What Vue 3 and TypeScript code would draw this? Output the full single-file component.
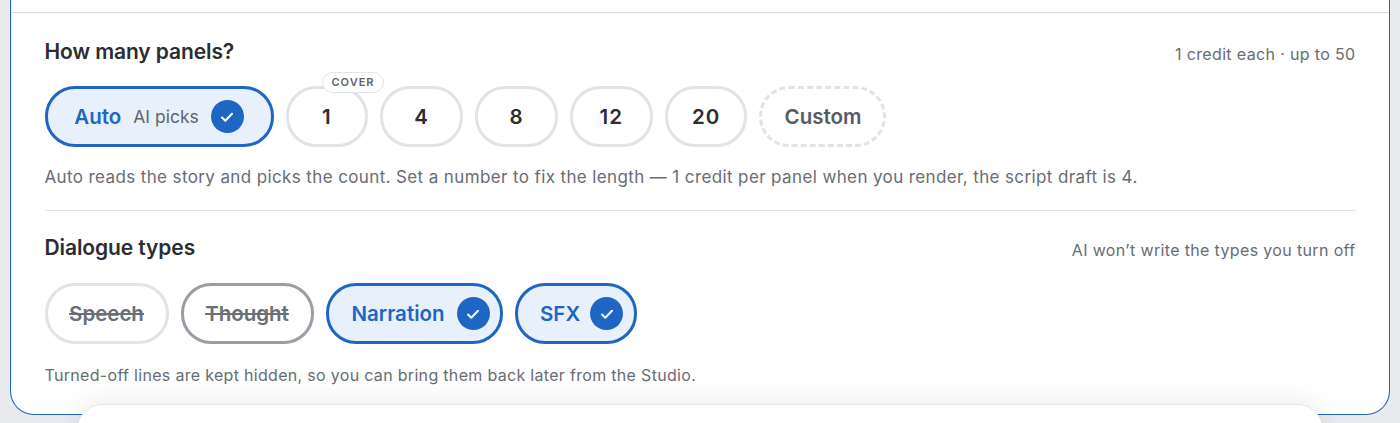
<script setup lang="ts">
interface Chip { label: string; sub?: string; on?: boolean; badge?: string; dashed?: boolean; off?: boolean; strong?: boolean; num?: boolean; left?: boolean; tight?: boolean; w: number }
const counts: Chip[] = [
  { label: 'Auto', sub: 'AI picks', on: true, w: 229 },
  { label: '1', badge: 'COVER', num: true, w: 82.8 },
  { label: '4', num: true, w: 82.8 },
  { label: '8', num: true, w: 82.8 },
  { label: '12', num: true, w: 82.8 },
  { label: '20', num: true, w: 82.8 },
  { label: 'Custom', dashed: true, w: 127 },
]
const types: Chip[] = [
  { label: 'Speech', off: true, w: 124 },
  { label: 'Thought', off: true, strong: true, w: 133 },
  { label: 'Narration', on: true, left: true, w: 177.5 },
  { label: 'SFX', on: true, left: true, tight: true, w: 122 },
]
function cls(c: Chip) {
  return { on: c.on, dashed: c.dashed, off: c.off, strong: c.strong, num: c.num, left: c.left, tight: c.tight }
}
</script>

<template>
  <div class="page">
    <div class="card">
      <div class="top"></div>
      <section class="sec first">
        <div class="head">
          <h2>How many panels?</h2>
          <span class="hint">1 credit each · up to 50</span>
        </div>
        <div class="chips">
          <button v-for="c in counts" :key="c.label" class="chip" :class="cls(c)" :style="{ width: c.w + 'px' }">
            <span v-if="c.badge" class="badge">{{ c.badge }}</span>
            <span class="label">{{ c.label }}</span>
            <span v-if="c.sub" class="sub">{{ c.sub }}</span>
            <span v-if="c.on" class="tick">
              <svg viewBox="0 0 16 16" width="16" height="16"><path d="M3 8.5l3.3 3.2L13 4.8" fill="none" stroke="#fff" stroke-width="2" stroke-linecap="round" stroke-linejoin="round"/></svg>
            </span>
          </button>
        </div>
        <p class="note big">Auto reads the story and picks the count. Set a number to fix the length — 1 credit per panel when you render, the script draft is 4.</p>
      </section>
      <section class="sec second">
        <div class="head">
          <h2>Dialogue types</h2>
          <span class="hint">AI won’t write the types you turn off</span>
        </div>
        <div class="chips">
          <button v-for="c in types" :key="c.label" class="chip" :class="cls(c)" :style="{ width: c.w + 'px' }">
            <span class="label">{{ c.label }}</span>
            <span v-if="c.on" class="tick">
              <svg viewBox="0 0 16 16" width="16" height="16"><path d="M3 8.5l3.3 3.2L13 4.8" fill="none" stroke="#fff" stroke-width="2" stroke-linecap="round" stroke-linejoin="round"/></svg>
            </span>
          </button>
        </div>
        <p class="note">Turned-off lines are kept hidden, so you can bring them back later from the Studio.</p>
      </section>
    </div>
    <div class="sheet"></div>
  </div>
</template>

<style>
html, body { margin: 0; background: #e9eaec; }
</style>

<style scoped>
.page {
  position: relative;
  width: 1400px;
  height: 423px;
  overflow: hidden;
  background: #e9eaec;
  font-family: Inter, "Liberation Sans", sans-serif;
}
.card {
  box-sizing: border-box;
  width: 1380px;
  height: 415px;
  margin-left: 10px;
  padding: 0 33.5px;
  background: #fff;
  border: 1.5px solid #1f66c4;
  border-top: 0;
  border-radius: 0 0 24px 24px;
}
.top {
  height: 12px;
  margin: 0 -33.5px;
  border-bottom: 1px solid #d9dde3;
}
.sec.first {
  padding-top: 26px;
  height: 198px;
  box-sizing: border-box;
  border-bottom: 1px solid #dfe1e5;
}
.sec.second { padding-top: 24px; }
.head {
  display: flex;
  justify-content: space-between;
  align-items: center;
  height: 27px;
}
h2 {
  margin: 0 0 2px;
  font-size: 21px;
  font-weight: 600;
  letter-spacing: -0.1px;
  color: #2b2d31;
}
.hint {
  margin-top: 2px;
  font-size: 16px;
  color: #686c73;
  letter-spacing: 0.35px;
}
.chips {
  display: flex;
  gap: 12px;
  margin-top: 20px;
}
.second .chips { margin-top: 21px; }
.chip {
  position: relative;
  box-sizing: border-box;
  height: 61px;
  padding: 0;
  display: flex;
  align-items: center;
  justify-content: center;
  gap: 12px;
  border: 3px solid #e1e3e6;
  border-radius: 30px;
  background: #fff;
  font-family: inherit;
  font-size: 20.5px;
  font-weight: 600;
  color: #2b2d31;
}
.chip.num { letter-spacing: 1px; }
.chip.dashed { border-style: dashed; color: #565b66; }
.chip.on {
  border-color: #1f66c4;
  background: #e8f0fb;
  color: #1f66c4;
}
.chip.left { justify-content: flex-start; padding-left: 23px; }
.chip.tight { gap: 10px; padding-left: 22px; }
.chip.off { color: #6b6f76; }
.chip.off .label { text-decoration: line-through; }
.chip.strong { border-color: #9a9ca6; }
.sub {
  font-size: 17.5px;
  font-weight: 400;
  color: #5f646c;
}
.tick {
  width: 33px;
  height: 33px;
  border-radius: 50%;
  background: #1f66c4;
  display: flex;
  align-items: center;
  justify-content: center;
}
.badge {
  position: absolute;
  top: -17px;
  left: 33px;
  padding: 0 9px;
  height: 21px;
  line-height: 19px;
  box-sizing: border-box;
  border: 1.5px solid #e3e5e8;
  border-radius: 11px;
  background: #fff;
  font-size: 11px;
  font-weight: 600;
  letter-spacing: 1px;
  color: #5f646c;
}
.note {
  margin: 19px 0 0;
  font-size: 16px;
  line-height: 24px;
  letter-spacing: 0.31px;
  color: #686c73;
}
.note.big {
  margin-top: 18px;
  font-size: 17px;
  letter-spacing: 0.38px;
}
.sheet {
  position: absolute;
  left: 78px;
  top: 405px;
  width: 1244px;
  height: 60px;
  background: #fff;
  border-radius: 24px 24px 0 0;
  box-shadow: 0 -1px 0 #e6e7ea, 0 -4px 28px rgba(0, 0, 0, 0.08);
}
</style>
